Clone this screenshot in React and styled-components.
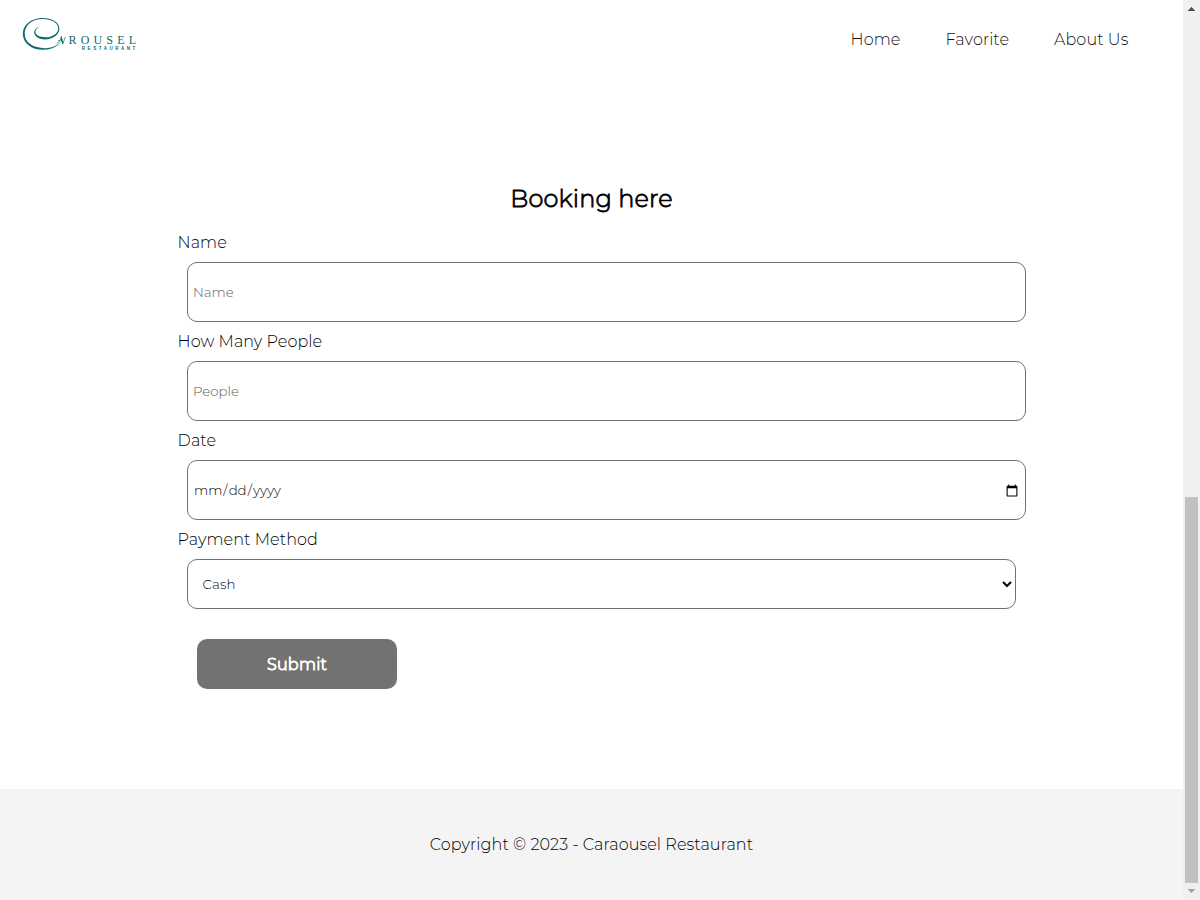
import React from "react";
import styled, { createGlobalStyle } from "styled-components";

const GlobalStyle = createGlobalStyle`
  * { box-sizing: border-box; }
  body {
    margin: 0;
    overflow: hidden;
    background: #fff;
    color: #000;
    font: 300 16px/20px Montserrat, Inter, sans-serif;
  }
`;

const Window = styled.div`
  display: flex;
  width: 1200px;
  height: 900px;
`;

const Page = styled.div`
  display: flex;
  flex-direction: column;
  width: 1183px;
`;

const Header = styled.header`
  display: flex;
  justify-content: space-between;
  height: 80px;
  padding: 10px 54.6px 0 20px;
`;

const Logo = styled.svg`
  display: block;
  width: 120px;
  height: 46px;
`;

const Nav = styled.nav`
  display: flex;
  gap: 45px;
  padding-top: 20px;
`;

const NavLink = styled.a`
  color: #111;
  letter-spacing: 0.1px;
  white-space: nowrap;
`;

const Main = styled.main`
  display: flex;
  flex: 1;
  flex-direction: column;
  padding: 104px 0 0 177.6px;
`;

const Title = styled.h2`
  width: 828px;
  margin: 0 0 19px;
  font-size: 24px;
  font-weight: 300;
  line-height: 30px;
  letter-spacing: 0.15px;
  text-align: center;
  -webkit-text-stroke: 0.8px #000;
`;

const Form = styled.form`
  display: flex;
  flex-direction: column;
  align-items: flex-start;
`;

const Label = styled.label`
  height: 20px;
  letter-spacing: 0.08px;
`;

const Input = styled.input`
  width: 839px;
  height: 60px;
  margin: 9px 0 10px 9.4px;
  padding: 1px 5px;
  border: 1px solid #707070;
  border-radius: 10px;
  background: #fff;
  color: #000;
  font: 300 13.333px Montserrat, Inter, sans-serif;
  letter-spacing: 0;

  &::placeholder { color: #5c5c5c; }

  &::-webkit-calendar-picker-indicator {
    width: 14px;
    height: 14px;
    margin-top: 1px;
    padding: 1px;
  }
`;

const Select = styled.select`
  width: 829px;
  height: 50px;
  margin: 9px 0 0 9.4px;
  padding: 0 0 0 10.5px;
  border: 1px solid #707070;
  border-radius: 10px;
  background: #fff;
  color: #000;
  font: 300 13.333px Montserrat, Inter, sans-serif;
  letter-spacing: 0.2px;
`;

const Submit = styled.button`
  width: 200px;
  height: 50px;
  margin: 30px 0 0 19.4px;
  border: 0;
  border-radius: 10px;
  background: #737271;
  color: #fff;
  font: 300 16px Montserrat, Inter, sans-serif;
  letter-spacing: 0.25px;
  -webkit-text-stroke: 0.95px #fff;
`;

const Footer = styled.footer`
  display: flex;
  justify-content: center;
  height: 111px;
  padding-top: 46px;
  background: #f4f4f4;
  letter-spacing: 0.09px;
`;

const Scrollbar = styled.div`
  display: flex;
  flex-direction: column;
  align-items: center;
  width: 17px;
  background: #f0f0f0;
`;

const ScrollArrow = styled.svg`
  width: 17px;
  height: 17px;
`;

const Thumb = styled.div`
  width: 13px;
  height: 386px;
  margin: 480px 0 0 0;
  background: #c1c1c1;
`;

const BrandLogo = () => (
  <Logo viewBox="20 10 120 46" aria-label="Carousel Restaurant">
    <g fill="#126b6d">
      <path d="M39 27C35.2 28.4 33.6 31 34.4 33.6C35.4 37.3 39.4 39.4 45 39.4C53 39.4 59.4 34.6 59.4 28.8C59.4 22.2 52 18 43 18C31.5 18 22.8 24.8 22.8 33.7C22.8 43 31.5 49.8 43 49.8C53 49.8 60 45 63.6 37.5C59.5 44.6 53.3 48.2 45 48.2C33.5 48.2 24.7 42.8 24.7 33.6C24.7 25 32.3 19 43 19C51.3 19 58.2 22.7 58.2 28.4C58.2 33.4 52.4 37.2 45.4 37.2C39.8 37.2 36.3 35.5 35.5 32.8C35 30.4 36.6 28.5 39 27Z" />
      <path d="M56 43.3c2.3-.5 4.6-3.5 4.9-7.4h.5l1.8 6 1.9-5h.6l-2.6 7.4h-.6l-1.9-5.1c-.8 2.3-2.2 4-4.6 4.4zM58 40h3v.6h-3z" />
      <text x="68.5" y="43.6" fontFamily="Liberation Serif, serif" fontSize="12" textLength="67.5" lengthAdjust="spacing">ROUSEL</text>
      <text x="81.8" y="49.8" fontFamily="Liberation Sans, sans-serif" fontSize="4.5" fontWeight="700" textLength="53.5" lengthAdjust="spacing">RESTAURANT</text>
    </g>
  </Logo>
);

export default function App() {
  return (
    <>
      <GlobalStyle />
      <Window>
        <Page>
          <Header>
            <BrandLogo />
            <Nav>
              <NavLink>Home</NavLink>
              <NavLink>Favorite</NavLink>
              <NavLink>About Us</NavLink>
            </Nav>
          </Header>
          <Main>
            <Title>Booking here</Title>
            <Form>
              <Label htmlFor="name">Name</Label>
              <Input id="name" placeholder="Name" />
              <Label htmlFor="people">How Many People</Label>
              <Input id="people" placeholder="People" />
              <Label htmlFor="date">Date</Label>
              <Input id="date" type="date" />
              <Label htmlFor="payment">Payment Method</Label>
              <Select id="payment">
                <option>Cash</option>
              </Select>
              <Submit type="button">Submit</Submit>
            </Form>
          </Main>
          <Footer>Copyright © 2023 - Caraousel Restaurant</Footer>
        </Page>
        <Scrollbar>
          <ScrollArrow viewBox="0 0 17 17">
            <path d="M5 11h7v-1h-1V9h-1V8H9V7H8v1H7v1H6v1H5z" fill="#505050" />
          </ScrollArrow>
          <Thumb />
          <ScrollArrow viewBox="0 0 17 17">
            <path d="M5 6h7v1h-1v1h-1v1H9v1H8V9H7V8H6V7H5z" fill="#a3a3a3" />
          </ScrollArrow>
        </Scrollbar>
      </Window>
    </>
  );
}
